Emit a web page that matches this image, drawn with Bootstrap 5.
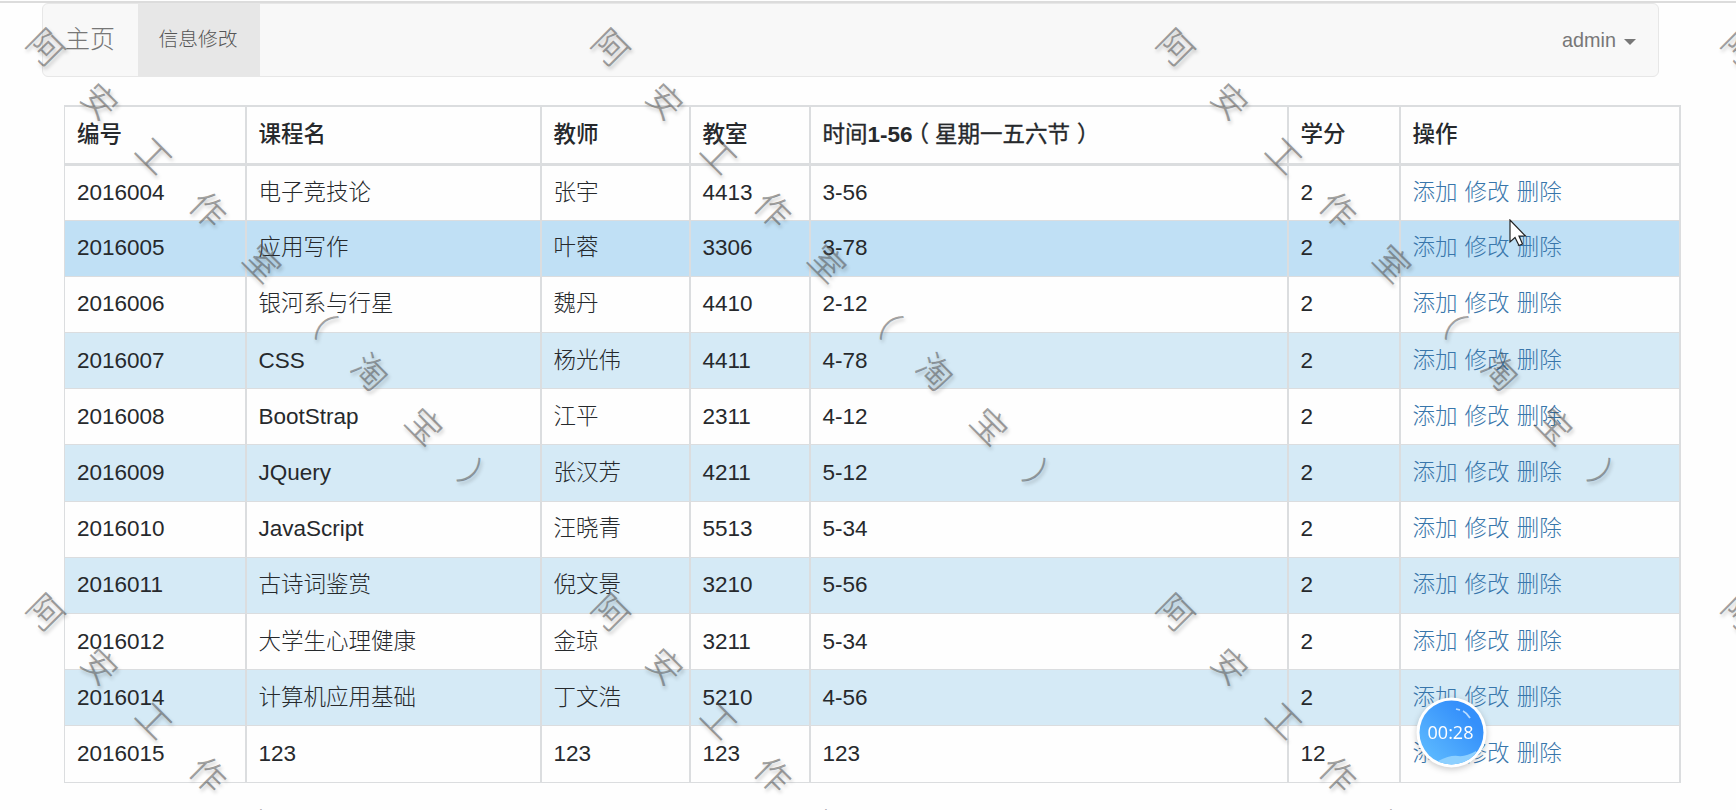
<!DOCTYPE html>
<html lang="zh-CN">
<head>
<meta charset="utf-8">
<title>主页</title>
<link rel="stylesheet" href="https://cdn.jsdelivr.net/npm/bootstrap@5.3.0/dist/css/bootstrap.min.css">
<style>
  body{font-family:"Liberation Sans","Noto Sans CJK SC",sans-serif;font-size:22.5px;line-height:32px;color:#222;background:#fefefe;height:810px;overflow:hidden;position:relative}
  .topline{height:3px;border-bottom:2px solid #dcdcdc}
  .mainbar{height:74px;margin:0 77px 0 42px;background:#f8f8f8;border:1px solid #e7e7e7;border-radius:6px;font-size:19.8px;font-weight:300}
  .mainbar .home{font-size:25px;color:#777;padding:0 28px 2px 22px;width:95px;white-space:nowrap}
  .mainbar .now{background:#e7e7e7;color:#555;width:122px;height:72px;padding:0 2px 2px 0}
  .mainbar .who{color:#777;padding-right:22px}
  .mainbar .dropdown-toggle::after{border-top-width:6px;border-left-width:6px;border-right-width:6px;margin-left:8px;vertical-align:2px}
  .courses{width:1615px;margin:28px 0 0 64px;table-layout:fixed;font-weight:300;--bs-table-color:#222;color:#222;--bs-table-bg:transparent;border-color:#dadcde}
  .courses th,.courses td{padding:0 0 0 12px;height:56.2px;vertical-align:middle;border:1px solid #dbdddf;border-right-width:2px;color:#26292c}
  .courses thead th{height:58px;border-bottom-width:3px;border-top-width:2px;font-weight:500;padding-top:1px}
  .courses thead th.slot{font-weight:400;-webkit-text-stroke:.35px #26292c}
  .courses thead b{font-weight:700;-webkit-text-stroke:0}
  .paren-l{margin:0 6px 0 -6px}
  .paren-r{margin-left:7px}
  .courses tbody tr:nth-child(even) td{background:#d5eaf6}
  .courses tbody tr.over td{background:#c0e0f5}
  .courses td:last-child{word-spacing:.8px}
  .courses td a{color:#3876ab}
  .stamps{position:absolute;inset:0;overflow:hidden;pointer-events:none}
  .stamp{position:absolute;font:300 34.5px/40px "Noto Sans CJK SC",sans-serif;letter-spacing:42px;white-space:nowrap;color:rgba(80,80,80,.5);-webkit-text-stroke:.6px rgba(80,80,80,.35);text-shadow:3px 1px 4px rgba(0,0,0,.25);transform-origin:17.5px 20px;transform:rotate(45deg)}
  .clock{position:absolute;left:1417px;top:697px;width:69px;height:69px;overflow:visible;filter:drop-shadow(0 2px 3px rgba(0,0,0,.2))}
  .pointer{position:absolute;left:1509px;top:219px}
</style>
</head>
<body>
<div class="topline"></div>
<nav class="mainbar d-flex align-items-center">
  <a class="home text-decoration-none" href="#">主页</a>
  <a class="now d-flex align-items-center justify-content-center text-decoration-none" href="#">信息修改</a>
  <a class="who dropdown-toggle ms-auto text-decoration-none" href="#">admin</a>
</nav>
<table class="table courses mb-0">
  <colgroup><col style="width:181px"><col style="width:295px"><col style="width:149px"><col style="width:120px"><col style="width:478px"><col style="width:112px"><col style="width:280px"></colgroup>
  <thead><tr><th>编号</th><th>课程名</th><th>教师</th><th>教室</th><th class="slot">时间<b>1-56</b><span class="paren-l">（</span>星期一五六节<span class="paren-r">）</span></th><th>学分</th><th>操作</th></tr></thead>
  <tbody id="rows"></tbody>
</table>
<div id="stamps" class="stamps"></div>
<svg class="pointer" width="18" height="28" viewBox="0 0 18 28"><path d="M1 1V23L6 18.5L10 26.5L13.5 25L10 17H16.5Z" fill="#fff" stroke="#222" stroke-width="1.2"/></svg>
<svg class="clock" viewBox="-1 -1 69 69">
  <defs><linearGradient id="g" x1="0" y1="1" x2="1" y2="0"><stop offset="0" stop-color="#63c0ff"/><stop offset=".75" stop-color="#3590fb"/></linearGradient><clipPath id="c"><circle cx="33.5" cy="34.5" r="32"/></clipPath></defs>
  <circle cx="33.5" cy="34.5" r="35" fill="#fff"/><circle cx="33.5" cy="34.5" r="32" fill="url(#g)"/>
  <path clip-path="url(#c)" d="M20 63Q32 57 40 58T58 53V68H20Z" fill="#8dd0ff"/>
  <path d="M38 11L42 12M45 13Q49 15 52 20" stroke="#b9dcff" stroke-width="1.7" fill="none"/>
  <text x="32.5" y="41" text-anchor="middle" font-family="Open Sans,sans-serif" font-size="18" fill="#fff">00:28</text>
</svg>
<script>
  const data = [
    ['2016004','电子竞技论','张宇','4413','3-56','2'],
    ['2016005','应用写作','叶蓉','3306','3-78','2'],
    ['2016006','银河系与行星','魏丹','4410','2-12','2'],
    ['2016007','CSS','杨光伟','4411','4-78','2'],
    ['2016008','BootStrap','江平','2311','4-12','2'],
    ['2016009','JQuery','张汉芳','4211','5-12','2'],
    ['2016010','JavaScript','汪晓青','5513','5-34','2'],
    ['2016011','古诗词鉴赏','倪文景','3210','5-56','2'],
    ['2016012','大学生心理健康','金琼','3211','5-34','2'],
    ['2016014','计算机应用基础','丁文浩','5210','4-56','2'],
    ['2016015','123','123','123','123','12']
  ];
  document.getElementById('rows').innerHTML = data.map((r, i) =>
    `<tr class="${i === 1 ? 'over' : ''}">${r.map(c => `<td>${c}</td>`).join('')}<td>${['添加','修改','删除'].map(t => `<a class="text-decoration-none" href="#">${t}</a>`).join(' ')}</td></tr>`).join('');
  let tiles = '';
  for (const y of [26, 591]) for (const x of [30, 595, 1160, 1725])
    tiles += `<div class="stamp" style="left:${x}px;top:${y}px">阿安工作室（淘宝）</div>`;
  document.getElementById('stamps').innerHTML = tiles;
</script>
<script src="https://cdn.jsdelivr.net/npm/bootstrap@5.3.0/dist/js/bootstrap.bundle.min.js"></script>
</body>
</html>
